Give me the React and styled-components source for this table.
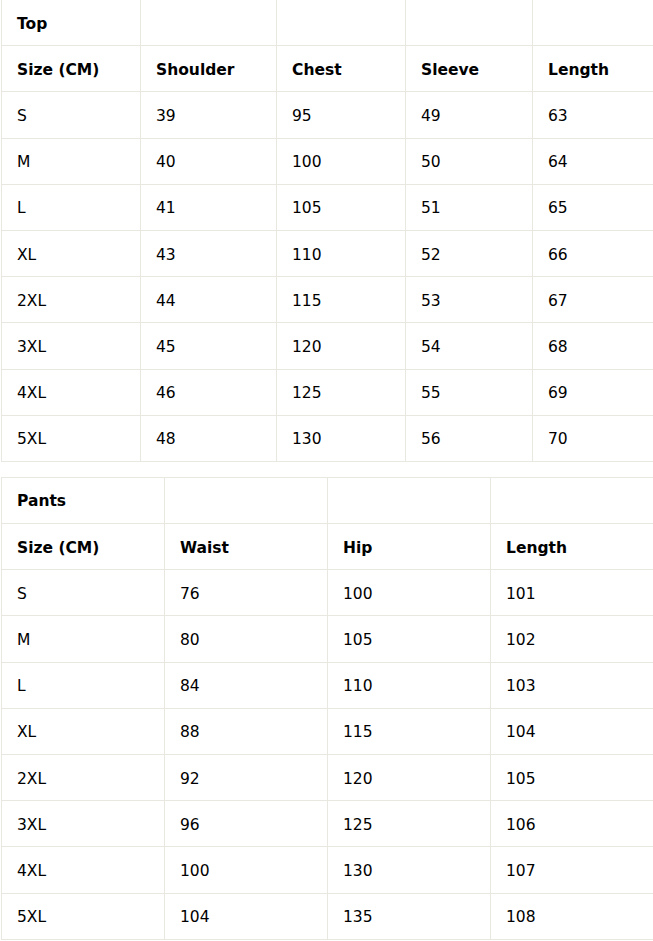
import styled, { createGlobalStyle } from "styled-components";

const GlobalStyle = createGlobalStyle`
  html, body {
    margin: 0;
    padding: 0;
    background: #fff;
    overflow: hidden;
  }
  body {
    font-family: "DejaVu Sans", "Liberation Sans", sans-serif;
    color: #000;
  }
`;

const top = {
  title: "Top",
  cols: [139, 136, 129, 127, 122],
  head: ["Size (CM)", "Shoulder", "Chest", "Sleeve", "Length"],
  rows: [
    ["S", 39, 95, 49, 63],
    ["M", 40, 100, 50, 64],
    ["L", 41, 105, 51, 65],
    ["XL", 43, 110, 52, 66],
    ["2XL", 44, 115, 53, 67],
    ["3XL", 45, 120, 54, 68],
    ["4XL", 46, 125, 55, 69],
    ["5XL", 48, 130, 56, 70],
  ],
};

const pants = {
  title: "Pants",
  cols: [163, 163, 163, 164],
  head: ["Size (CM)", "Waist", "Hip", "Length"],
  rows: [
    ["S", 76, 100, 101],
    ["M", 80, 105, 102],
    ["L", 84, 110, 103],
    ["XL", 88, 115, 104],
    ["2XL", 92, 120, 105],
    ["3XL", 96, 125, 106],
    ["4XL", 100, 130, 107],
    ["5XL", 104, 135, 108],
  ],
};

function SizeTable({ data }) {
  return (
    <Table>
      <colgroup>
        {data.cols.map((w, i) => (
          <col key={i} style={{ width: w }} />
        ))}
      </colgroup>
      <tbody>
        <tr>
          <Head>{data.title}</Head>
          {data.cols.slice(1).map((_, i) => (
            <Cell key={i} />
          ))}
        </tr>
        <tr>
          {data.head.map((h) => (
            <Head key={h}>{h}</Head>
          ))}
        </tr>
        {data.rows.map((r) => (
          <tr key={r[0]}>
            {r.map((v, i) => (
              <Cell key={i}>{v}</Cell>
            ))}
          </tr>
        ))}
      </tbody>
    </Table>
  );
}

export default function App() {
  return (
    <Page>
      <GlobalStyle />
      <SizeTable data={top} />
      <SizeTable data={pants} />
    </Page>
  );
}

const Page = styled.div`
  display: flex;
  flex-direction: column;
  gap: 15px;
  margin: -1px 0 0 1px;
  width: 653px;
`;

const Table = styled.table`
  border-collapse: collapse;
  table-layout: fixed;
  width: 653px;
  border: 1px solid #e8e8e1;

  tr {
    height: 46.2px;
  }
`;

const Cell = styled.td`
  border: 1px solid #e8e8e1;
  padding: 2px 15px 0;
  font-size: 15.5px;
  font-weight: 400;
  text-align: left;
  vertical-align: middle;
  white-space: nowrap;
`;

const Head = styled(Cell)`
  font-weight: 700;
`;
